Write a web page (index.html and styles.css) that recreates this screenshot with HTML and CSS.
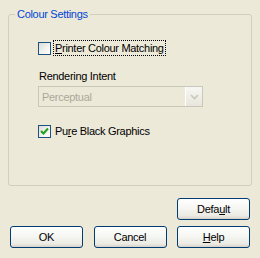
FILE: index.html
```html
<!DOCTYPE html>
<html lang="en">
<head>
    <meta charset="UTF-8">
    <title>Colour Settings</title>
    <link rel="stylesheet" href="styles.css">
</head>
<body>
    <div class="dialog">
        <fieldset class="group">
            <legend>Colour Settings</legend>
            <div class="group-body">
                <div class="check-row">
                    <span class="checkbox"></span>
                    <span class="check-label focused"><u>P</u>rinter Colour Matching</span>
                </div>

                <div class="field-label">Rendering Intent</div>
                <div class="combo disabled">
                    <span class="combo-text">Perceptual</span>
                    <span class="combo-btn">
                        <svg width="9" height="6" viewBox="0 0 9 6">
                            <path d="M1 1 L4.5 4.5 L8 1" fill="none" stroke="#c9c7ba" stroke-width="1.6"/>
                        </svg>
                    </span>
                </div>

                <div class="check-row second">
                    <span class="checkbox checked">
                        <svg width="9" height="9" viewBox="0 0 9 9">
                            <path d="M1 4 L3.5 6.5 L8 1.5" fill="none" stroke="#21a121" stroke-width="2"/>
                        </svg>
                    </span>
                    <span class="check-label">Pu<u>r</u>e Black Graphics</span>
                </div>
            </div>
        </fieldset>

        <div class="footer">
            <div class="default-row">
                <button class="btn">Defa<u>u</u>lt</button>
            </div>
            <div class="button-row">
                <button class="btn">OK</button>
                <button class="btn">Cancel</button>
                <button class="btn"><u>H</u>elp</button>
            </div>
        </div>
    </div>
</body>
</html>
```

FILE: styles.css
```css
html, body {
    margin: 0;
    padding: 0;
}
body {
    width: 260px;
    height: 258px;
    background: #ece9d8;
    font-family: "Liberation Sans", Arial, sans-serif;
    font-size: 11px;
    letter-spacing: -0.3px;
    color: #000;
    overflow: hidden;
}
u {
    text-decoration: underline;
    text-underline-offset: 1px;
}
.dialog {
    padding: 8px 8px 0 8px;
}
.group {
    margin: 0;
    padding: 0;
    border: 1px solid #d0d0bf;
    border-radius: 3px;
}
.group legend {
    margin-left: 6px;
    padding: 0 2px;
    line-height: 13px;
    color: #0046d5;
}
.group-body {
    padding: 19px 0 46px 29px;
}
.check-row {
    display: flex;
    align-items: center;
    height: 16px;
}
.check-row.second {
    margin-top: 16px;
}
.checkbox {
    box-sizing: border-box;
    width: 13px;
    height: 13px;
    border: 1px solid #1c5180;
    background: linear-gradient(135deg, #dcdcd7 0%, #f4f4f0 60%, #ffffff 100%);
    display: flex;
    align-items: center;
    justify-content: center;
}
.check-label {
    margin-left: 2px;
    padding: 0 1px 0 1px;
    line-height: 14px;
    border: 1px solid transparent;
}
.check-label.focused {
    border: 1px dotted #000;
}
.field-label {
    margin-top: 14px;
    line-height: 13px;
    padding-left: 1px;
}
.combo {
    box-sizing: border-box;
    margin-top: 3px;
    width: 165px;
    height: 21px;
    border: 1px solid #c9c7ba;
    background: #ece9d8;
    display: flex;
    align-items: center;
}
.combo-text {
    flex: 1;
    padding-left: 3px;
    color: #aca899;
}
.combo-btn {
    box-sizing: border-box;
    width: 17px;
    height: 19px;
    border-left: 1px solid #fff;
    background: linear-gradient(#f7f7f4, #e8e6dc);
    display: flex;
    align-items: center;
    justify-content: center;
}
.footer {
    padding: 0 2px;
}
.default-row {
    display: flex;
    justify-content: flex-end;
    margin-top: 12px;
}
.button-row {
    display: flex;
    justify-content: space-between;
    margin-top: 6px;
}
.btn {
    box-sizing: border-box;
    width: 73px;
    height: 22px;
    margin: 0;
    padding: 0;
    border: 1px solid #003c74;
    border-radius: 3px;
    background: linear-gradient(#ffffff 0%, #f6f6f3 45%, #ebeae3 85%, #d6d0c5 100%);
    font-family: "Liberation Sans", Arial, sans-serif;
    font-size: 11px;
    letter-spacing: -0.3px;
    color: #000;
}
```
